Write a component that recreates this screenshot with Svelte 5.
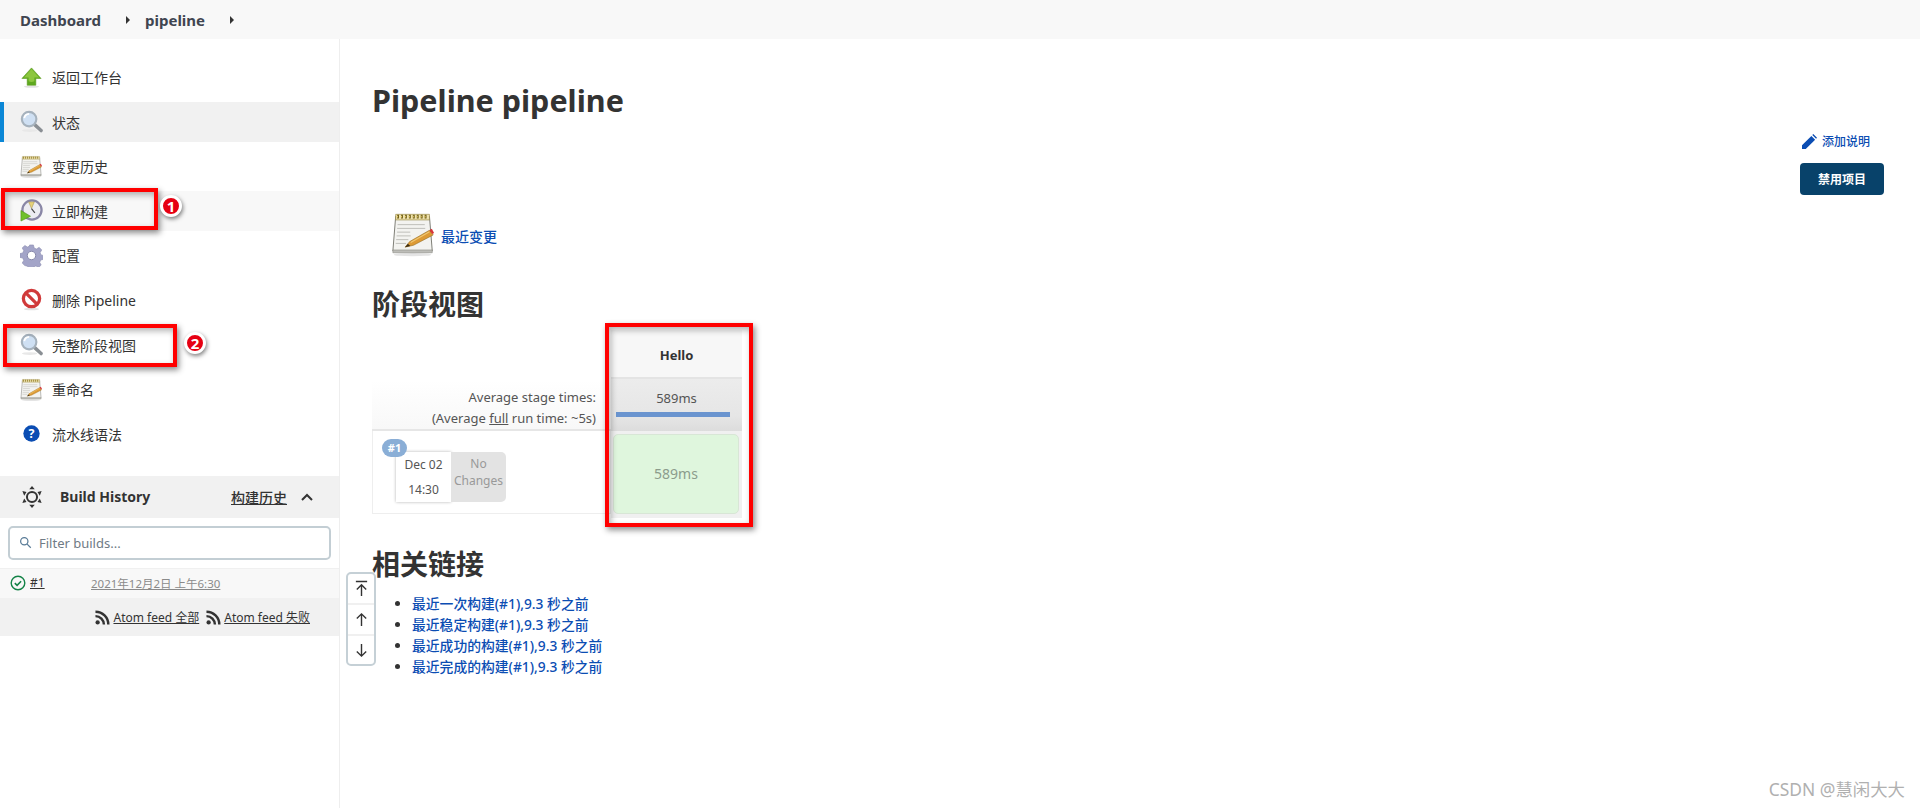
<script lang="ts">
	const links = ['最近一次构建(#1),9.3 秒之前', '最近稳定构建(#1),9.3 秒之前', '最近成功的构建(#1),9.3 秒之前', '最近完成的构建(#1),9.3 秒之前'];
</script>

{#snippet magnifier()}
	<svg class="ico" viewBox="0 0 24 24">
		<ellipse cx="10" cy="21.500" rx="8" ry="1.500" fill="#e8e8e8" />
		<path d="M15 15l7 6.500" stroke="#8a8f94" stroke-width="3.600" stroke-linecap="round" />
		<circle cx="9.500" cy="9.500" r="7.600" fill="#cfe0f3" stroke="#a6b2bd" stroke-width="2.200" />
		<path d="M4.500 8.500a5.400 5.400 0 0 1 5-4.400" fill="none" stroke="#fff" stroke-width="1.800" />
	</svg>
{/snippet}

{#snippet notepad(cls)}
	<svg class={cls} viewBox="0 0 48 48">
		<ellipse cx="23" cy="46" rx="20" ry="1.800" fill="#e4e4e4" />
		<path d="M5 5h36l3 37H2z" fill="#f3f3f0" stroke="#77776f" />
		<path d="M2 41h42v3H2z" fill="#bdbdb8" stroke="#85857f" stroke-width=".6" />
		<path d="M5 3h36v6H5z" fill="#efe2ad" stroke="#8d7b32" stroke-width=".6" />
		<path d="M6.500 5.500h33" stroke="#6a5a18" stroke-width="4" stroke-dasharray="2 2.200" />
		<path d="M6.500 5.500h33" stroke="#e9cf63" stroke-width="2" stroke-dasharray="1 3.200" />
		<path d="M7 14h29M6.500 18h30M6.500 22h14M6 26h15M5.500 30h13M5 34h11" stroke="#bcbcb6" />
		<path d="M15 38l5-6 21-12 4 5-21 11z" fill="#dd9a35" stroke="#8f6a20" stroke-width=".6" />
		<path d="M21 33l20-11.500" stroke="#f0c873" stroke-width="1.200" />
		<path d="M41 20l2.500-1.500 2.500 4.500-2 1z" fill="#d8363a" />
		<path d="M15 38l3-3.500 2.500 2.200z" fill="#3b2d16" />
	</svg>
{/snippet}

<div class="page">
	<nav class="crumbs">
		<span>Dashboard</span>
		<i class="caret"></i>
		<span>pipeline</span>
		<i class="caret"></i>
	</nav>

	<div class="body">
		<aside class="side">
			<ul class="tasks">
				<li class="task">
					<svg class="ico" viewBox="0 0 24 24">
						<ellipse cx="12" cy="21.500" rx="8" ry="1.300" fill="#e2e2e2" />
						<path d="M12 2L22 13h-5.500v7h-9v-7H2z" fill="#5ea81e" stroke="#5b9a1c" stroke-width=".6" />
						<path d="M12 3L4 12h5v4c2 1 4 1 6 0v-4h5z" fill="#8cc63f" />
					</svg>
					<span>返回工作台</span>
				</li>
				<li class="task active">{@render magnifier()}<span>状态</span></li>
				<li class="task">{@render notepad('ico')}<span>变更历史</span></li>
				<li class="task soft">
					<svg class="ico" viewBox="0 0 24 24">
						<circle cx="12.500" cy="11.500" r="10" fill="#ececf1" stroke="#8a87a6" stroke-width="2.400" />
						<path d="M9 3h6L12 10z" fill="#e7d27a" stroke="#9b8c4d" stroke-width=".5" />
						<path d="M12 10l3.500 4.500" stroke="#444" stroke-width="1.200" />
						<path d="M1 12l0 11 10-5z" fill="#6fc02b" stroke="#4c8f16" stroke-width=".6" />
					</svg>
					<span>立即构建</span>
				</li>
				<li class="task">
					<svg class="ico gear" viewBox="0 0 24 24">
						<path d="M10 1h4l.8 3.200 2.400 1 2.800-1.700 2.700 2.700-1.700 2.800 1 2.400 2.400.6v4l-2.800.8-1 2.400 1.500 2.800-2.700 2.500-2.800-1.600-2.400 1-.7 2.800h-3.600l-.8-2.800-2.400-1L5 22.500 2.300 19.900l1.600-2.800-1-2.400L0 14v-4l2.900-.7 1-2.400L2.300 4.200 5 1.500l2.800 1.700 2-1z" fill="#a3a4c8" stroke="#8a8bae" stroke-width=".6" />
						<circle cx="12" cy="12" r="4.400" fill="#fff" stroke="#8283a6" />
					</svg>
					<span>配置</span>
				</li>
				<li class="task">
					<svg class="ico" viewBox="0 0 24 24">
						<ellipse cx="12" cy="22" rx="8" ry="1.300" fill="#e2e2e2" />
						<circle cx="12" cy="11" r="8.500" fill="#fff" stroke="#d03a3a" stroke-width="3.400" />
						<path d="M6 5l12 12" stroke="#d03a3a" stroke-width="3.400" />
					</svg>
					<span>删除 Pipeline</span>
				</li>
				<li class="task">{@render magnifier()}<span>完整阶段视图</span></li>
				<li class="task">{@render notepad('ico')}<span>重命名</span></li>
				<li class="task">
					<svg class="ico" viewBox="0 0 24 24">
						<circle cx="12" cy="12" r="8.500" fill="#0b4db3" />
						<text x="12" y="16.300" class="qmark">?</text>
					</svg>
					<span>流水线语法</span>
				</li>
			</ul>

			<section class="history">
				<header class="history-head">
					<svg class="sun" viewBox="0 0 24 24">
						<circle cx="12" cy="12" r="5.500" fill="none" stroke="#333" stroke-width="2.200" />
						<path d="M12 0l3 3.500H9zM12 24l-3-3.500h6zM1.500 5.500l4.500 1-2.500 4zM22.500 5.500l-4.500 1 2.500 4zM1.500 18.500l4.500-1-2.500-4zM22.500 18.500l-4.500-1 2.500-4z" fill="#333" />
					</svg>
					<strong>Build History</strong>
					<a class="history-link" href="#top">构建历史</a>
					<svg class="chev" viewBox="0 0 12 8"><path d="M1 7l5-5 5 5" fill="none" stroke="#333" stroke-width="2" /></svg>
				</header>
				<div class="filter">
					<svg viewBox="0 0 16 16" class="lens"><circle cx="6.500" cy="6.500" r="4.500" fill="none" stroke="#587a96" stroke-width="1.500" /><path d="M10 10l4.500 4.500" stroke="#587a96" stroke-width="1.500" /></svg>
					<span>Filter builds...</span>
				</div>
				<div class="build-row">
					<svg class="ok" viewBox="0 0 16 16"><circle cx="8" cy="8" r="6.800" fill="none" stroke="#138347" stroke-width="1.400" /><path d="M4.800 8.200l2.300 2.200 4-4.200" fill="none" stroke="#138347" stroke-width="1.600" /></svg>
					<a href="#top" class="build-num">#1</a>
					<a href="#top" class="build-date">2021年12月2日 上午6:30</a>
				</div>
				<div class="feeds">
					<svg class="rss" viewBox="0 0 16 16"><circle cx="2.800" cy="13.200" r="2.300" fill="#333" /><path d="M.5 6.500a9 9 0 0 1 9 9M.5 1.800a13.700 13.700 0 0 1 13.700 13.700" fill="none" stroke="#333" stroke-width="2.600" /></svg>
					<a href="#top">Atom feed 全部</a>
					<svg class="rss" viewBox="0 0 16 16"><circle cx="2.800" cy="13.200" r="2.300" fill="#333" /><path d="M.5 6.500a9 9 0 0 1 9 9M.5 1.800a13.700 13.700 0 0 1 13.700 13.700" fill="none" stroke="#333" stroke-width="2.600" /></svg>
					<a href="#top">Atom feed 失败</a>
				</div>
			</section>
		</aside>

		<main class="main">
			<div class="title-row">
				<h1>Pipeline pipeline</h1>
				<div class="actions">
					<a href="#top" class="add-desc">
						<svg viewBox="0 0 16 16"><path d="M0 16v-4L10 2l4 4L4 16zM11 1l1-1 4 4-1 1z" fill="#0b4db3" /></svg>
						添加说明
					</a>
					<button type="button" class="disable">禁用项目</button>
				</div>
			</div>

			<div class="changes">
				{@render notepad('big-note')}
				<a href="#top">最近变更</a>
			</div>

			<h2 class="stage-h">阶段视图</h2>

			<div class="stage">
				<div class="stage-left">
					<div class="avg">
						<p>Average stage times:</p>
						<p>(Average <u>full</u> run time: ~5s)</p>
					</div>
					<div class="run">
						<span class="tag">#1</span>
						<div class="date"><span>Dec 02</span><span>14:30</span></div>
						<div class="nochange">No<br />Changes</div>
					</div>
				</div>
				<div class="stage-col">
					<div class="col-head">Hello</div>
					<div class="col-avg">
						<span>589ms</span>
						<i class="bar"></i>
					</div>
					<div class="col-cell"><div class="cell">589ms</div></div>
				</div>
			</div>

			<h2 class="links-h">相关链接</h2>
			<ul class="links">
				{#each links as link}
					<li><a href="#top">{link}</a></li>
				{/each}
			</ul>
		</main>
	</div>

	<div class="mark box1"></div>
	<div class="mark box2"></div>
	<div class="mark box3"></div>
	<span class="badge b1">1</span>
	<span class="badge b2">2</span>

	<div class="scroller">
		<div><svg viewBox="0 0 16 18"><path d="M2 1.500h12M8 17V5M3 10l5-5 5 5" fill="none" stroke="#333" stroke-width="1.500" /></svg></div>
		<div><svg viewBox="0 0 16 18"><path d="M8 16V3M3 8l5-5 5 5" fill="none" stroke="#333" stroke-width="1.500" /></svg></div>
		<div><svg viewBox="0 0 16 18"><path d="M8 2v13M3 10l5 5 5-5" fill="none" stroke="#333" stroke-width="1.500" /></svg></div>
	</div>

	<span class="watermark">CSDN @慧闲大大</span>
</div>

<style>
	:global(body) {
		margin: 0;
		background: #fff;
	}

	.page {
		position: relative;
		width: 1920px;
		height: 808px;
		overflow: hidden;
		font-family: 'Noto Sans', 'Noto Sans CJK SC', sans-serif;
		font-size: 14px;
		color: #333;
	}

	a {
		color: inherit;
	}

	.crumbs {
		display: flex;
		align-items: center;
		height: 39px;
		padding-left: 20px;
		background: #f8f8f8;
		font-size: 15px;
		font-weight: 700;
		color: #3f4550;
	}

	.caret {
		width: 0;
		height: 0;
		margin: 0 15px 0 25px;
		border-left: 4px solid #333;
		border-top: 4px solid transparent;
		border-bottom: 4px solid transparent;
	}

	.body {
		display: flex;
		height: 769px;
	}

	.side {
		flex: 0 0 339px;
		border-right: 1px solid #eee;
	}

	.tasks {
		list-style: none;
		margin: 0;
		padding: 18px 0 0;
		display: flex;
		flex-direction: column;
		gap: 4.600px;
	}

	.task {
		display: flex;
		align-items: center;
		gap: 9px;
		height: 40px;
		padding-left: 20px;
	}

	.task.active {
		background: #f1f1f1;
		box-shadow: inset 4px 0 #0b87d6;
	}

	.task.soft {
		background: #f8f8f8;
	}

	.ico {
		width: 23px;
		height: 23px;
		flex: none;
	}

	.qmark {
		fill: #fff;
		font-size: 13px;
		font-weight: 700;
		text-anchor: middle;
		font-family: 'Noto Sans', sans-serif;
	}

	.history {
		margin-top: 22px;
	}

	.history-head {
		display: flex;
		align-items: center;
		height: 42px;
		padding: 0 26px 0 21px;
		background: #f1f1f1;
		font-size: 14px;
	}

	.sun {
		width: 22px;
		height: 24px;
		margin-right: 17px;
	}

	.history-head strong {
		flex: 1;
		font-size: 14px;
	}

	.history-link {
		font-weight: 500;
		margin-right: 14px;
	}

	.chev {
		width: 12px;
		height: 8px;
	}

	.filter {
		display: flex;
		align-items: center;
		gap: 7px;
		box-sizing: border-box;
		height: 34px;
		margin: 8px;
		padding-left: 9px;
		border: 2px solid #c3ced4;
		border-radius: 5px;
		font-size: 13px;
		color: #6f7b85;
	}

	.lens {
		width: 13px;
		height: 13px;
	}

	.build-row {
		display: flex;
		align-items: center;
		height: 30px;
		padding-bottom: 1px;
		padding-left: 10px;
		box-sizing: border-box;
		background: #f8f8f8;
		border-top: 1px solid #f0f0f0;
		font-size: 12px;
	}

	.ok {
		width: 16px;
		height: 16px;
		margin-right: 4px;
	}

	.build-num {
		width: 61px;
	}

	.build-date {
		color: #8a8a8a;
		font-size: 11.500px;
	}

	.feeds {
		display: flex;
		align-items: center;
		justify-content: flex-end;
		height: 38px;
		padding: 1px 29px 0 0;
		box-sizing: border-box;
		background: #f1f1f1;
		font-size: 12px;
	}

	.rss {
		width: 15px;
		height: 15px;
		margin: 0 3px 0 7px;
	}

	.main {
		flex: 1;
		padding-left: 32px;
		min-width: 0;
	}

	.title-row {
		display: flex;
		justify-content: space-between;
		align-items: flex-start;
		padding-right: 36px;
	}

	h1,
	h2 {
		margin: 0;
		font-size: 28px;
		font-weight: 700;
		line-height: 38px;
		color: #333;
	}

	h1 {
		margin-top: 42px;
		font-size: 30.500px;
	}

	.actions {
		display: flex;
		flex-direction: column;
		align-items: flex-end;
		padding-top: 92px;
	}

	.add-desc {
		display: flex;
		align-items: center;
		gap: 5px;
		color: #0b4db3;
		font-size: 12px;
		font-weight: 500;
		text-decoration: none;
		height: 20px;
		padding-right: 14px;
	}

	.add-desc svg {
		width: 15px;
		height: 15px;
	}

	.disable {
		width: 84px;
		height: 32px;
		margin-top: 12px;
		border: 0;
		border-radius: 4px;
		background: #08426a;
		color: #fff;
		font: 700 12px 'Noto Sans', 'Noto Sans CJK SC', sans-serif;
	}

	.changes {
		display: flex;
		align-items: center;
		gap: 5px;
		margin: 15px 0 0 19px;
		height: 48px;
		color: #0b4db3;
		font-size: 14px;
		font-weight: 500;
	}

	.changes a {
		padding-top: 3px;
		text-decoration: none;
	}

	.big-note {
		width: 45px;
		height: 48px;
	}

	.stage-h {
		margin-top: 27px;
	}

	.stage {
		display: flex;
		margin-top: 7px;
	}

	.stage-left {
		width: 239px;
		padding-top: 50px;
		font-size: 13px;
		color: #555;
	}

	.avg {
		height: 51px;
		padding: 7px 15px 0 0;
		text-align: right;
		background: linear-gradient(#fff, #f8f8f8);
		border-bottom: 2px solid #e6e6e6;
		box-sizing: border-box;
	}

	.avg p {
		margin: 0;
		line-height: 21px;
	}

	.run {
		position: relative;
		display: flex;
		box-sizing: border-box;
		height: 83px;
		padding: 21px 0 0 23px;
		border: 1px solid #eee;
		border-top: 0;
	}

	.tag {
		position: absolute;
		left: 9px;
		top: 8px;
		width: 25px;
		height: 18px;
		border-radius: 9px;
		background: #8aaed6;
		color: #fff;
		font-size: 11px;
		font-weight: 700;
		line-height: 18px;
		text-align: center;
	}

	.date {
		display: flex;
		flex-direction: column;
		align-items: center;
		justify-content: space-around;
		width: 55px;
		height: 50px;
		background: #fff;
		box-shadow: 0 0 3px rgba(0, 0, 0, 0.3);
		font-size: 12px;
	}

	.nochange {
		width: 55px;
		height: 50px;
		padding-top: 3px;
		box-sizing: border-box;
		background: #e3e3e3;
		border-radius: 0 5px 5px 0;
		color: #999;
		font-size: 12px;
		line-height: 17px;
		text-align: center;
	}

	.stage-col {
		width: 131px;
		text-align: center;
	}

	.col-head {
		height: 49px;
		line-height: 50px;
		background: #f7f7f7;
		font-size: 13px;
		font-weight: 700;
		box-sizing: border-box;
		border-bottom: 2px solid #e4e4e4;
	}

	.col-avg {
		position: relative;
		height: 52px;
		background: linear-gradient(#ececec, #e6e6e6 70%, #dcdcdc);
		line-height: 38px;
		font-size: 13px;
		color: #555;
	}

	.bar {
		position: absolute;
		left: 5px;
		top: 33px;
		width: 114px;
		height: 5px;
		background: #6a94cf;
	}

	.col-cell {
		height: 87px;
		padding: 3px 3px 4px 2px;
		box-sizing: border-box;
		background: #f0f0f0;
	}

	.cell {
		height: 80px;
		box-sizing: border-box;
		line-height: 78px;
		background: #dff6dd;
		border: 1px solid #d8e6d6;
		border-radius: 5px;
		color: #8c9c8c;
		font-size: 14px;
	}

	.links-h {
		margin-top: 27px;
	}

	.links {
		margin: 10px 0 0;
		padding-left: 40px;
		line-height: 21px;
		font-size: 13.800px;
		color: #333;
	}

	.links a {
		color: #0b4db3;
		text-decoration: none;
		font-weight: 500;
	}

	.mark {
		position: absolute;
		box-sizing: border-box;
		border: 4px solid #f00;
		box-shadow: 2px 3px 6px rgba(0, 0, 0, 0.45), inset 2px 3px 6px rgba(0, 0, 0, 0.3);
	}

	.box1 {
		left: 1px;
		top: 188px;
		width: 157px;
		height: 42px;
	}

	.box2 {
		left: 3px;
		top: 324px;
		width: 174px;
		height: 43px;
	}

	.box3 {
		left: 605px;
		top: 323px;
		width: 148px;
		height: 204px;
	}

	.badge {
		position: absolute;
		width: 16px;
		height: 16px;
		border: 3px solid #fff;
		border-radius: 50%;
		background: #e60012;
		box-shadow: 1px 2px 4px rgba(0, 0, 0, 0.5);
		color: #fff;
		font-size: 15px;
		font-weight: 700;
		line-height: 16px;
		text-align: center;
	}

	.b1 {
		left: 160px;
		top: 195px;
	}

	.b2 {
		left: 184px;
		top: 332px;
	}

	.scroller {
		position: absolute;
		left: 346px;
		top: 572px;
		width: 30px;
		box-sizing: border-box;
		border: 2px solid #c5d0d6;
		border-radius: 5px;
		background: #fff;
	}

	.scroller div {
		display: flex;
		align-items: center;
		justify-content: center;
		height: 29px;
		border-bottom: 2px solid #f0f0f0;
	}

	.scroller div:last-child {
		height: 28px;
		border-bottom: 0;
	}

	.scroller svg {
		width: 15px;
		height: 17px;
	}

	.watermark {
		position: absolute;
		right: 15px;
		top: 776px;
		color: #b0b0b0;
		font-size: 17.400px;
	}
</style>
